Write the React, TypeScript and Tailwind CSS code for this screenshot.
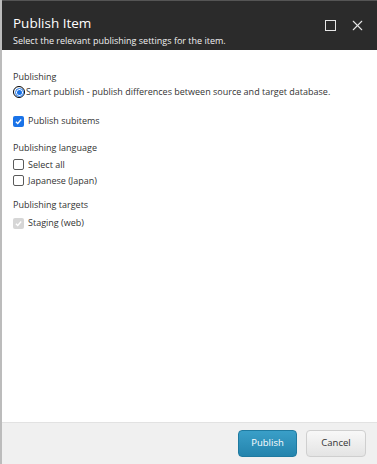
import { X } from 'lucide-react'

function Check({ checked, disabled }: { checked?: boolean; disabled?: boolean }) {
  if (checked) {
    return (
      <span
        className={
          'flex h-[11px] w-[11px] items-center justify-center rounded-[2px] ' +
          (disabled ? 'bg-[#d6d6d6]' : 'bg-[#1a73e8]')
        }
      >
        <svg viewBox="0 0 12 12" className="h-[9px] w-[9px]">
          <path d="M2.5 6.2 L5 8.6 L9.6 3.4" fill="none" stroke="white" strokeWidth="1.8" />
        </svg>
      </span>
    )
  }
  return <span className="h-[11px] w-[11px] rounded-[2px] border border-[#5a5a5a] bg-white" />
}

export default function App() {
  return (
    <div
      className="flex h-[464px] w-[377px] flex-col border-l-2 border-[#bcbcbc] bg-white"
      style={{ fontFamily: '"Open Sans", sans-serif' }}
    >
      <div className="flex h-[50px] items-start border-t border-[#555] bg-[#2b2b2b] pl-[11px] pr-[11px] pt-[13px]">
        <div className="flex-1">
          <div className="text-[13.5px] leading-[18px] text-white">Publish Item</div>
          <div className="mt-[3px] text-[9px] leading-[12px] text-[#f0f0f0]">
            Select the relevant publishing settings for the item.
          </div>
        </div>
        <div className="mt-[3px] flex items-center gap-[13px]">
          <span className="h-[11px] w-[11px] border-[1.5px] border-[#e6e6e6]" />
          <X className="h-[17px] w-[17px] text-[#e6e6e6]" strokeWidth={1.5} />
        </div>
      </div>

      <div className="flex-1 px-[11px] pt-[20px] text-[9px] text-[#333]">
        <div className="leading-[14px]">Publishing</div>
        <div className="mt-[1px] flex items-center gap-[1px] leading-[14px]">
          <span className="flex h-[12px] w-[12px] items-center justify-center rounded-full border-[1.5px] border-black">
            <span className="h-[9px] w-[9px] rounded-full border-[1.5px] border-[#1a73e8] bg-white p-[1px]">
              <span className="block h-full w-full rounded-full bg-[#1a73e8]" />
            </span>
          </span>
          <span>Smart publish - publish differences between source and target database.</span>
        </div>

        <div className="mt-[15px] flex items-center gap-[4px] leading-[14px]">
          <Check checked />
          <span>Publish subitems</span>
        </div>

        <div className="mt-[13px] leading-[14px]">Publishing language</div>
        <div className="mt-[2px] flex items-center gap-[4px] leading-[15px]">
          <Check />
          <span>Select all</span>
        </div>
        <div className="mt-[1px] flex items-center gap-[4px] leading-[15px]">
          <Check />
          <span>Japanese (Japan)</span>
        </div>

        <div className="mt-[10px] leading-[14px]">Publishing targets</div>
        <div className="mt-[4px] flex items-center gap-[4px] leading-[14px]">
          <Check checked disabled />
          <span>Staging (web)</span>
        </div>
      </div>

      <div className="flex h-[42px] items-center justify-end gap-[9px] border-t border-[#e2e2e2] bg-[#f0f0f0] pr-[11px] pb-[1px]">
        <button className="h-[27px] w-[59px] rounded-[4px] border border-[#1f7aa0] bg-gradient-to-b from-[#3a9fc8] to-[#2484ad] text-[9.5px] text-white">
          Publish
        </button>
        <button className="h-[27px] w-[60px] rounded-[4px] border border-[#cfcfcf] bg-gradient-to-b from-[#f8f8f8] to-[#e4e4e4] text-[9.5px] text-[#333]">
          Cancel
        </button>
      </div>
    </div>
  )
}
